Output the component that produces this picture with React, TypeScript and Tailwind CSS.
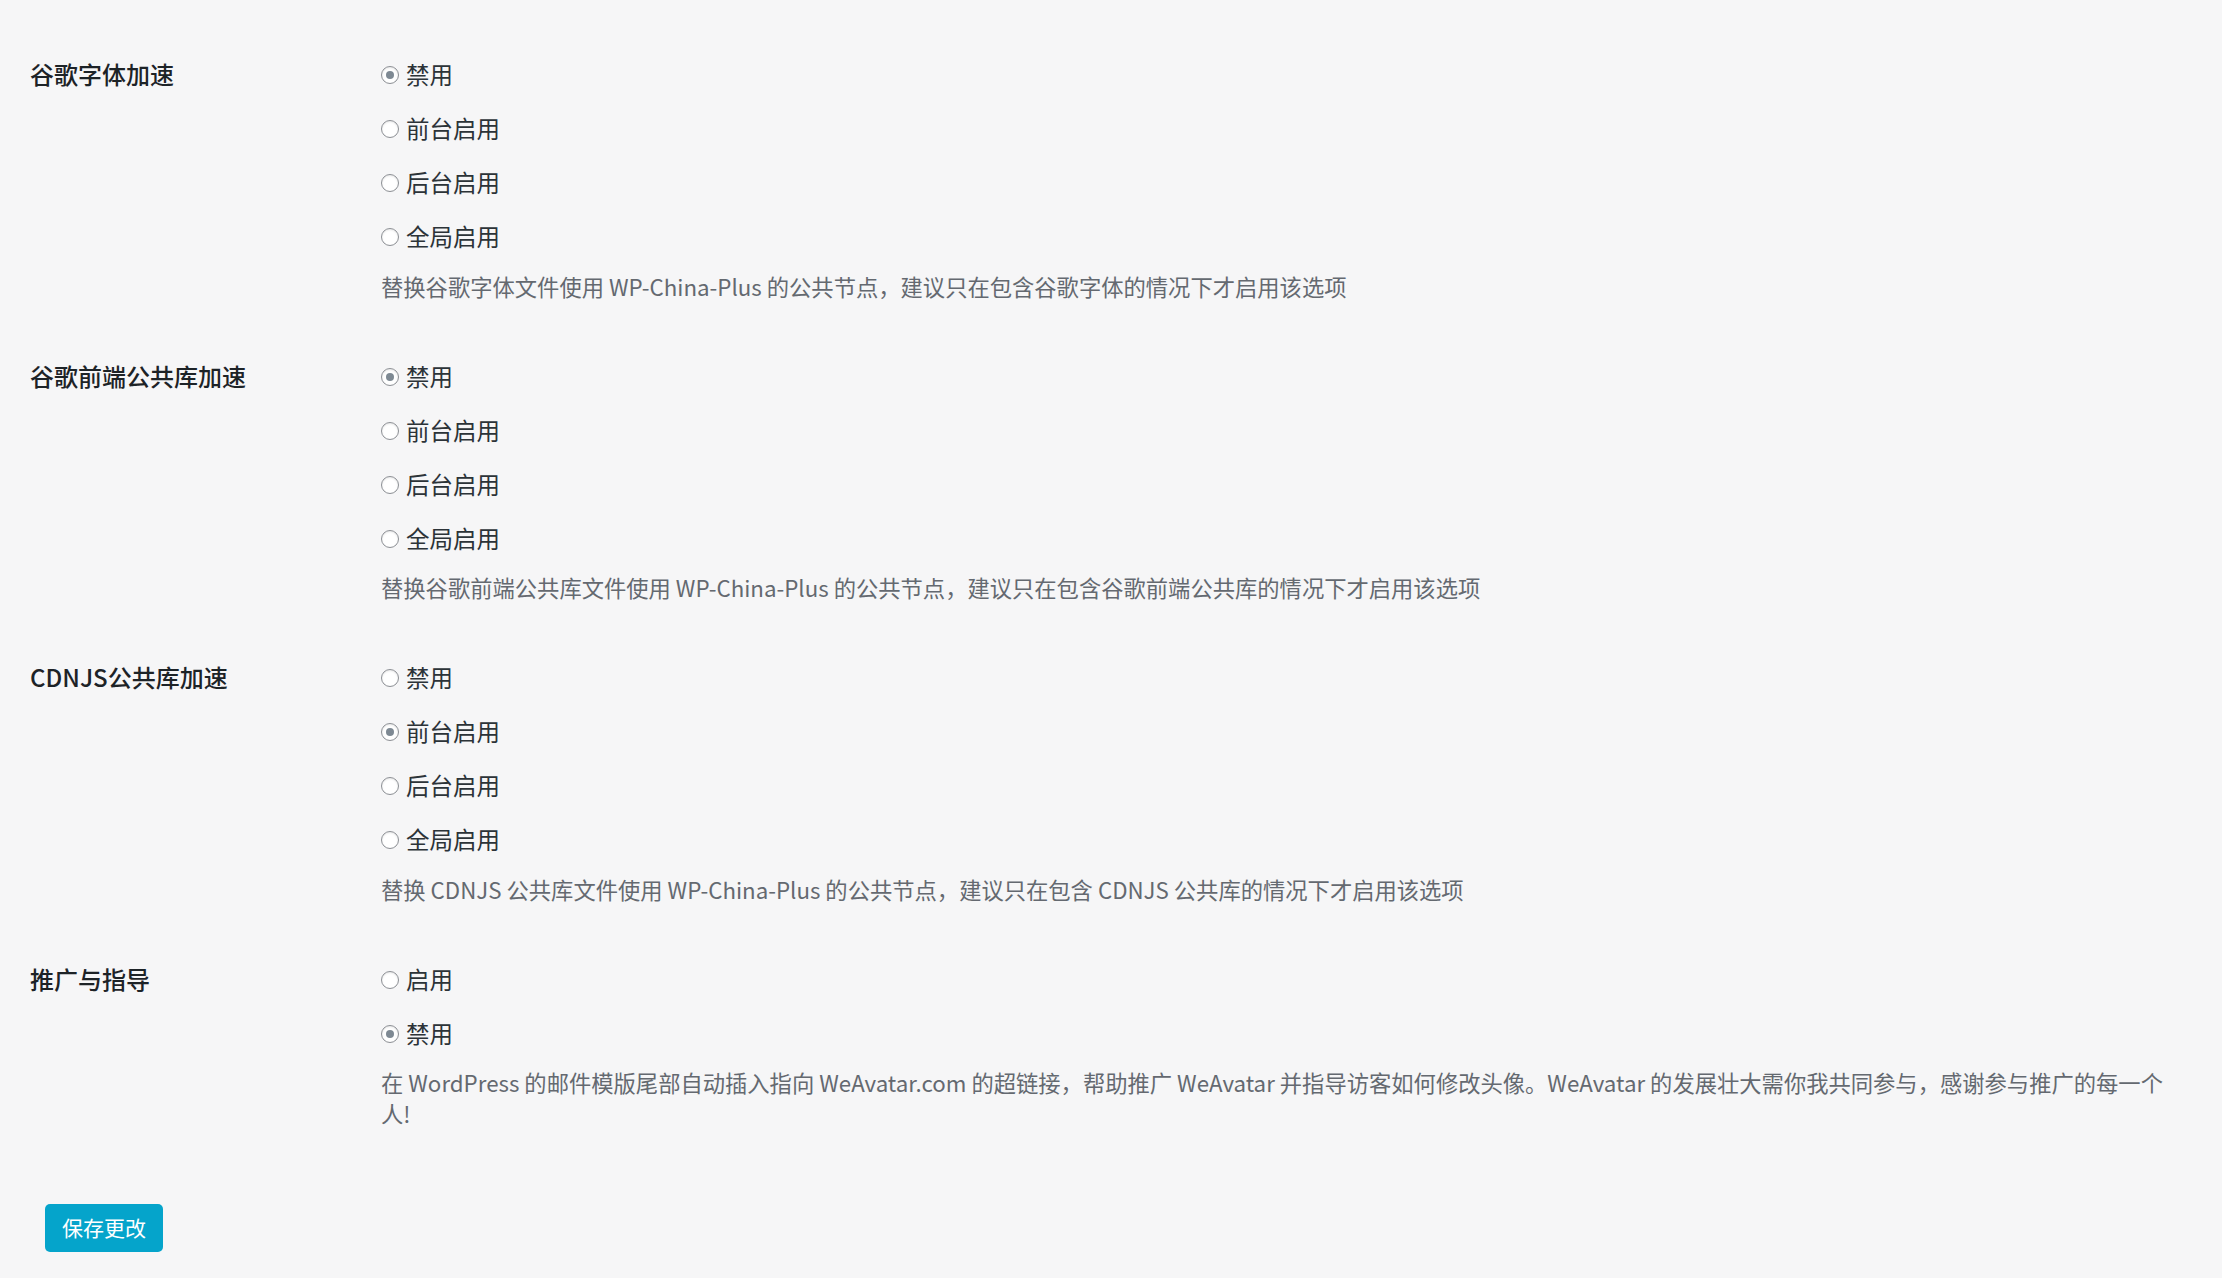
import { useState } from "react";

type Section = {
  key: string;
  label: string;
  options: string[];
  selected: number;
  description: string;
};

const sections: Section[] = [
  {
    key: "google_fonts",
    label: "谷歌字体加速",
    options: ["禁用", "前台启用", "后台启用", "全局启用"],
    selected: 0,
    description:
      "替换谷歌字体文件使用 WP-China-Plus 的公共节点，建议只在包含谷歌字体的情况下才启用该选项",
  },
  {
    key: "google_ajax",
    label: "谷歌前端公共库加速",
    options: ["禁用", "前台启用", "后台启用", "全局启用"],
    selected: 0,
    description:
      "替换谷歌前端公共库文件使用 WP-China-Plus 的公共节点，建议只在包含谷歌前端公共库的情况下才启用该选项",
  },
  {
    key: "cdnjs",
    label: "CDNJS公共库加速",
    options: ["禁用", "前台启用", "后台启用", "全局启用"],
    selected: 1,
    description:
      "替换 CDNJS 公共库文件使用 WP-China-Plus 的公共节点，建议只在包含 CDNJS 公共库的情况下才启用该选项",
  },
  {
    key: "weavatar_promo",
    label: "推广与指导",
    options: ["启用", "禁用"],
    selected: 1,
    description:
      "在 WordPress 的邮件模版尾部自动插入指向 WeAvatar.com 的超链接，帮助推广 WeAvatar 并指导访客如何修改头像。WeAvatar 的发展壮大需你我共同参与，感谢参与推广的每一个人!",
  },
];

function Radio({ checked }: { checked: boolean }) {
  return (
    <span className="flex h-[18px] w-[18px] shrink-0 items-center justify-center rounded-full border border-[#8c8f94] bg-white shadow-[inset_0_1px_2px_rgba(0,0,0,0.1)]">
      {checked && <span className="h-[8px] w-[8px] rounded-full bg-[#7e8993]" />}
    </span>
  );
}

function SettingRow({ section }: { section: Section }) {
  const [value, setValue] = useState(section.selected);

  return (
    <div className="flex py-[24px]">
      <div className="flex h-[52px] w-[351px] shrink-0 items-center text-[24px] font-medium text-[#1d2327]">
        {section.label}
      </div>
      <div className="flex min-w-0 flex-1 flex-col">
        {section.options.map((option, i) => (
          <label
            key={option}
            className="flex h-[54px] cursor-pointer items-center gap-[7px] text-[23.5px] text-[#2c3338]"
            onClick={() => setValue(i)}
          >
            <Radio checked={value === i} />
            <span>{option}</span>
          </label>
        ))}
        <p className="mt-[6.5px] text-[22.3px] leading-[31px] text-[#646970]">
          {section.description}
        </p>
      </div>
    </div>
  );
}

export default function App() {
  return (
    <div className="min-h-screen bg-[#f6f6f7] pl-[30px] pr-[50px] pt-[24px] font-['Noto_Sans_CJK_SC','Noto_Sans',sans-serif]">
      {sections.map((section) => (
        <SettingRow key={section.key} section={section} />
      ))}
      <div className="mt-[51px] pl-[15px]">
        <button
          type="submit"
          className="h-[48px] rounded-[5px] bg-[#05a4cb] px-[17px] text-[21px] text-white"
        >
          保存更改
        </button>
      </div>
    </div>
  );
}
